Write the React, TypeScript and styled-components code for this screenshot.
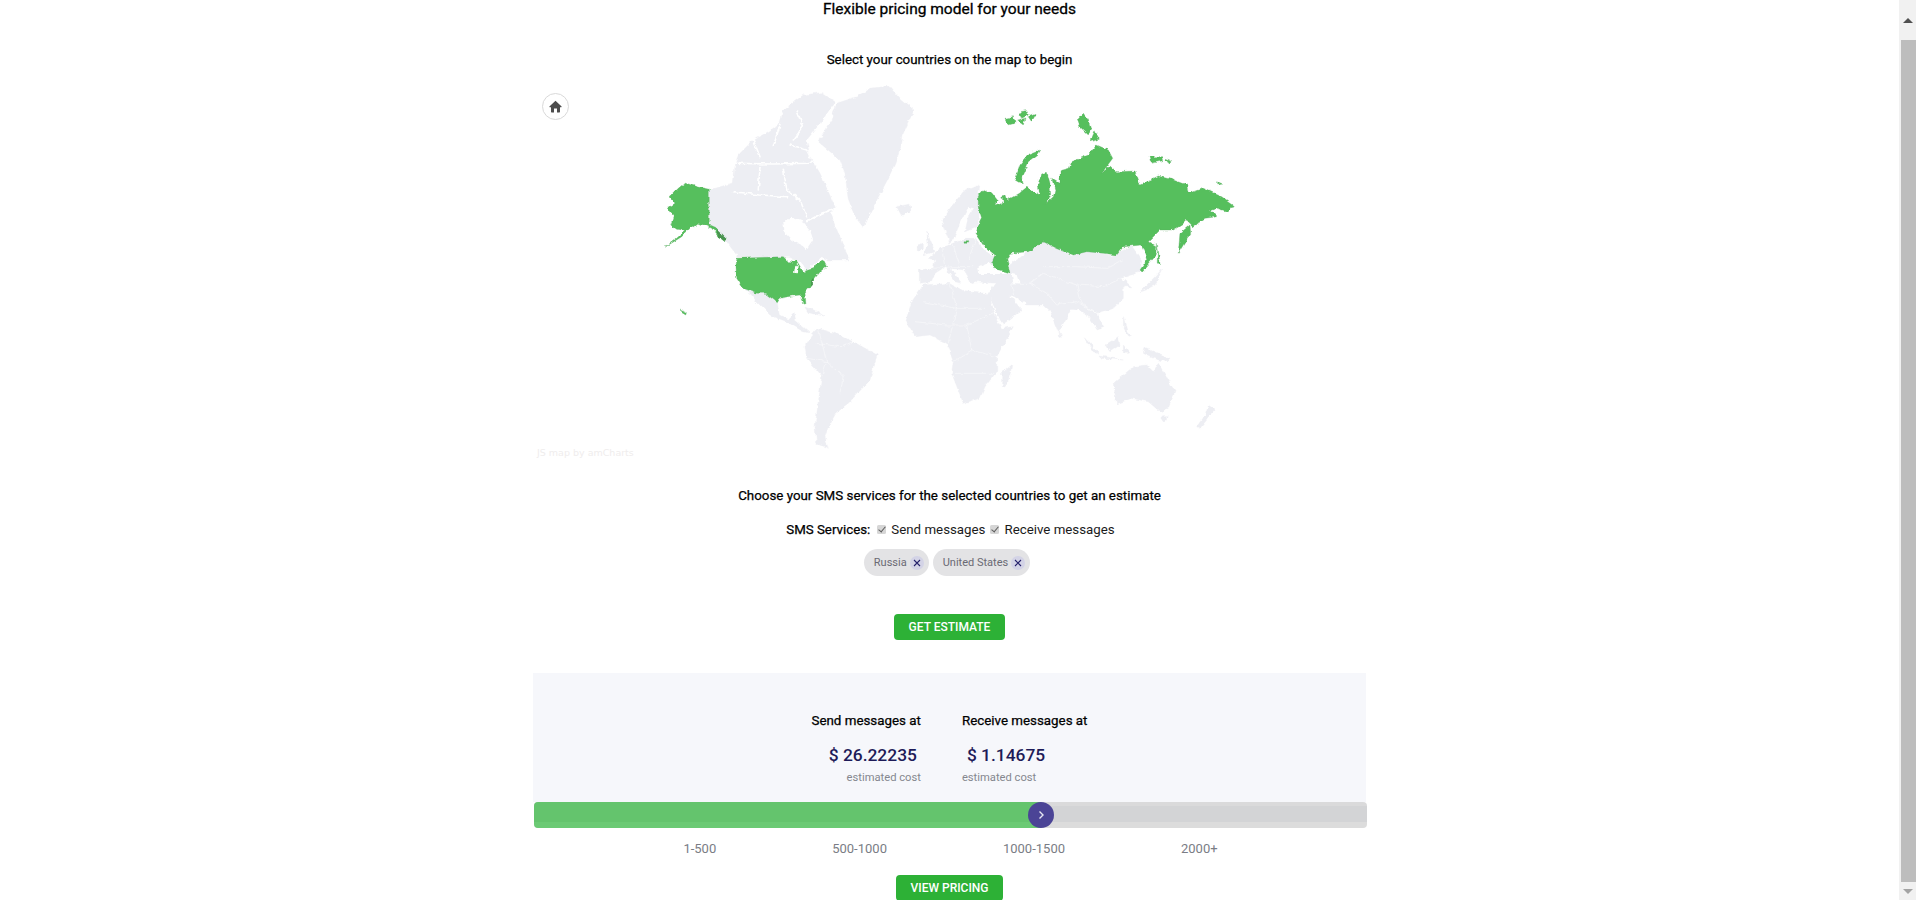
import React from "react";
import styled, { createGlobalStyle } from "styled-components";

const Global = createGlobalStyle`
  html, body { margin: 0; padding: 0; height: 900px; overflow: hidden; background: #fff; }
  body { font-family: Roboto, "Liberation Sans", sans-serif; color: #000; }
  * { box-sizing: border-box; }
`;

const Shell = styled.div`
  display: flex;
  width: 1916px;
  height: 900px;
  overflow: hidden;
`;
const Main = styled.main`
  flex: 1;
  min-width: 0;
  height: 900px;
  padding-top: 1px;
  overflow: hidden;
  display: flex;
  flex-direction: column;
  align-items: center;
`;
const ScrollBar = styled.div`
  width: 17px;
  height: 900px;
  background: #f1f1f1;
  display: flex;
  flex-direction: column;
  align-items: flex-end;
`;
const ScrollArrow = styled.div<{ $height: number; $up?: boolean; $tone: string }>`
  width: 17px;
  height: ${(p) => p.$height}px;
  display: flex;
  align-items: center;
  justify-content: center;
  &::before {
    content: "";
    width: 0;
    height: 0;
    border-left: 5px solid transparent;
    border-right: 5px solid transparent;
    ${(p) => (p.$up ? "border-bottom" : "border-top")}: 5px solid ${(p) => p.$tone};
  }
`;
const ScrollThumb = styled.div`
  width: 15px;
  height: 842px;
  background: #bdbdbd;
`;
const Title = styled.h1`
  margin: 0;
  font-size: 15.5px;
  line-height: 16px;
  font-weight: 400;
  -webkit-text-stroke: 0.3px #000;
`;
const Subtitle = styled.h2<{ $top: number }>`
  margin: ${(p) => p.$top}px 0 0;
  font-size: 13.35px;
  line-height: 16px;
  font-weight: 400;
  -webkit-text-stroke: 0.25px #000;
`;
const MapArea = styled.div`
  position: relative;
  width: 833px;
  height: 420px;
`;
const MapSvg = styled.svg`
  display: block;
  width: 833px;
  height: 420px;
`;
const Land = styled.polygon`
  fill: #edeef3;
  stroke: #edeef3;
  stroke-width: 0.4;
  stroke-linejoin: round;
`;
const Water = styled.polygon`
  fill: #fff;
`;
const Picked = styled.polygon`
  fill: #57bf5d;
  stroke: #5aa761;
  stroke-width: 0.3;
  stroke-linejoin: round;
`;
const PickedShade = styled.polygon`
  fill: #4a9350;
`;
const Frontier = styled.polyline`
  fill: none;
  stroke: #fff;
  stroke-width: 0.5;
  stroke-opacity: 0.85;
  stroke-linejoin: round;
`;
const Channel = styled.polyline`
  fill: none;
  stroke: #fff;
  stroke-width: 1.6;
  stroke-linecap: round;
  stroke-linejoin: round;
`;
const HomeButton = styled.button`
  position: absolute;
  left: 9px;
  top: 25px;
  width: 27px;
  height: 27px;
  padding: 0;
  border: 1px solid #d9d9d9;
  border-radius: 50%;
  background: #fff;
  display: flex;
  align-items: center;
  justify-content: center;
`;
const Credit = styled.span`
  position: absolute;
  left: 4px;
  top: 378px;
  font-family: "DejaVu Sans", sans-serif;
  font-size: 9.5px;
  line-height: 14px;
  color: #efeded;
`;
const ServicesRow = styled.div`
  margin: 16px 0 0 2px;
  height: 20px;
  display: flex;
  align-items: center;
  gap: 5px;
  font-size: 13.3px;
  line-height: 20px;
`;
const ServicesLabel = styled.span`
  -webkit-text-stroke: 0.25px #000;
  margin-right: 2px;
`;
const CheckLabel = styled.label`
  display: flex;
  align-items: center;
  color: #1b1b1b;
`;
const Check = styled.input`
  appearance: none;
  position: relative;
  width: 9px;
  height: 9px;
  margin: 0 5px 2px 0;
  border-radius: 1.5px;
  background: #d6d6d6;
  &::after {
    content: "";
    position: absolute;
    left: 2.8px;
    top: 0.6px;
    width: 3px;
    height: 6px;
    border: solid #5c5c5c;
    border-width: 0 1.3px 1.3px 0;
    transform: rotate(40deg);
  }
`;
const Chips = styled.div`
  margin: 9px 5px 0 0;
  display: flex;
  gap: 4px;
`;
const Chip = styled.div`
  height: 27px;
  border-radius: 14px;
  background: #e3e3e5;
  display: flex;
  align-items: center;
  padding: 0 5px 0 10px;
  gap: 3px;
  font-size: 11px;
  color: #6a6a74;
`;
const ChipClose = styled.span`
  width: 14px;
  height: 14px;
  border-radius: 50%;
  background: #d3d3e6;
  display: flex;
  align-items: center;
  justify-content: center;
`;
const ActionButton = styled.button<{ $top: number; $width: number }>`
  flex: none;
  margin-top: ${(p) => p.$top}px;
  width: ${(p) => p.$width}px;
  height: 26px;
  padding: 0;
  border: 0;
  border-radius: 4px;
  background: #2db136;
  color: #fff;
  font-family: inherit;
  font-size: 12px;
  font-weight: 500;
  text-transform: uppercase;
`;
const Results = styled.section`
  margin-top: 33px;
  width: 833px;
  display: flex;
  flex-direction: column;
`;
const Panel = styled.div`
  width: 833px;
  height: 129px;
  background: #f6f7fb;
  padding-top: 40px;
  display: flex;
  justify-content: center;
  gap: 41px;
`;
const CostColumn = styled.div<{ $end?: boolean }>`
  display: flex;
  flex-direction: column;
  align-items: ${(p) => (p.$end ? "flex-end" : "flex-start")};
`;
const CostTitle = styled.div`
  font-size: 13.35px;
  line-height: 16px;
  -webkit-text-stroke: 0.25px #000;
`;
const CostValue = styled.div<{ $end?: boolean }>`
  margin-top: 14px;
  font-size: 17.4px;
  line-height: 24px;
  font-weight: 500;
  color: #1e1b58;
  ${(p) => (p.$end ? "padding-right: 4px;" : "padding-left: 5px;")}
`;
const CostNote = styled.div`
  margin-top: 4px;
  font-size: 11.2px;
  line-height: 14px;
  color: #85878f;
`;
const SliderTrack = styled.div`
  position: relative;
  flex: none;
  margin-left: 1px;
  width: 833px;
  height: 26px;
  border-radius: 4px;
  background: linear-gradient(#dadadb 0 4px, #d3d4d6 4px 20px, #dcdcdc 20px);
`;
const SliderFill = styled.div`
  height: 26px;
  border-radius: 4px 0 0 4px;
  background: linear-gradient(#64c46d 0 20px, #6bca74 20px);
`;
const SliderKnob = styled.div`
  position: absolute;
  top: 0;
  margin-left: -13px;
  width: 26px;
  height: 26px;
  border-radius: 50%;
  background: #4b4496;
  display: flex;
  align-items: center;
  justify-content: center;
`;
const Tiers = styled.div`
  margin: 13px 0 0 2px;
  display: flex;
  justify-content: center;
  gap: 116px;
  font-size: 13px;
  line-height: 16px;
  color: #7a7d85;
`;

type Pt = [number, number];
const place = (ox: number, oy: number, pts: number[]): string => {
  const out: string[] = [];
  for (let i = 0; i < pts.length; i += 2) {
    out.push(`${(ox + pts[i] / 3).toFixed(1)},${(oy + pts[i + 1] / 3).toFixed(1)}`);
  }
  return out.join(" ");
};

const A: Pt = [520, 0];
const N: Pt = [650, 170];
const U: Pt = [640, 230];
const E: Pt = [900, 170];
const S: Pt = [960, 230];
const R: Pt = [960, 90];

const land: [Pt, number[]][] = [
  // Greenland
  [A, [950,310,1010,290,1050,265,1110,258,1145,300,1182,330,1150,400,1145,430,1125,490,1105,535,1060,620,1030,682,1005,650,985,600,975,520,960,480,895,425,930,370]],
  // Canada with the Arctic islands, channels are cut afterwards
  [A, [569,570,640,548,645,500,660,460,700,420,745,395,780,370,790,330,850,285,905,278,945,305,900,370,860,420,870,470,900,520,945,620,930,640,955,700,970,740,990,780,925,780,905,770,860,812,840,785,805,772,655,772,605,705,570,675]],
  [A, [1130,620,1170,612,1172,632,1145,648]],
  // Mexico, Central America
  [U, [310,175,350,190,375,190,412,218,418,255,445,268,462,250,468,272,510,308,490,305,440,275,390,255,350,215,335,195]],
  [U, [495,232,525,240,552,258,505,248]],
  // South America
  [U, [495,350,512,320,535,295,590,312,640,335,712,375,700,410,690,450,625,520,590,545,565,590,555,620,565,655,530,640,525,590,545,440,500,385]],
  // Iceland, British Isles, Scandinavia
  [E, [0,110,30,108,32,122,5,135]],
  [E, [80,185,92,215,105,245,70,255,85,225]],
  [E, [52,225,70,220,70,240,52,240]],
  [E, [240,45,190,65,150,115,125,155,140,195,150,220,165,195,180,160,205,110,222,115,205,140,195,185,232,170,240,115,235,70]],
  // Eurasia
  [E, [58,340,58,300,100,295,105,270,85,265,125,232,150,225,195,205,228,205,250,240,285,262,275,290,328,312,322,290,385,245,430,212,475,235,515,258,565,240,635,258,695,228,725,270,720,305,665,325,695,350,670,350,670,385,640,415,590,430,612,472,592,480,565,440,535,418,515,415,475,487,450,425,428,405,375,405,345,380,328,375,365,420,310,462,285,435,255,385,285,340,225,335,210,340,195,300,150,295,185,340,165,335,135,290,105,310,95,335]],
  // Africa
  [E, [70,345,150,340,195,365,255,370,280,430,305,475,340,470,290,560,290,605,255,650,240,685,190,700,155,610,160,575,140,520,90,495,45,500,18,450,35,395]],
  // Indian Ocean, Pacific
  [S, [155,405,148,450,135,470,125,465,125,430]],
  [S, [298,305,306,318,298,320]],
  [S, [540,185,590,135,608,115,585,165,555,180]],
  [S, [490,260,500,300,515,315,505,320,490,290]],
  [S, [370,320,420,372,400,365]],
  [S, [435,345,475,320,480,345,450,365]],
  [S, [420,378,490,390,425,385]],
  [S, [490,345,510,370,490,370]],
  [S, [555,352,630,385,620,395,580,385,550,370]],
  [S, [460,460,520,410,560,405,580,425,595,400,645,485,625,535,600,545,565,515,515,505,470,522]],
  [S, [605,560,622,560,615,575]],
  [S, [745,525,765,540,740,570,720,595,710,590,735,555]],
];

const waters: [Pt, number[]][] = [
  [A, [790,670,810,650,850,665,870,690,880,720,860,750,845,735,815,720,795,700]],
  [E, [232,290,260,278,320,300,330,312,280,312,235,312]],
  [E, [335,312,350,315,358,340,340,338]],
  [E, [270,385,298,445,305,460,285,430]],
  [E, [345,380,380,400,365,405]],
];

const channels: [Pt, number[]][] = [
  [A, [640,490,760,492,870,490,890,468]],
  [A, [720,500,715,570]],
  [A, [790,505,800,570,840,600,860,650]],
  [A, [810,435,860,450,870,470]],
  [A, [780,375,760,440]],
  [A, [700,420,720,470]],
  [A, [640,575,720,585,800,590]],
  [A, [860,665,905,640,945,625]],
  [A, [830,330,850,380,820,420]],
];

const frontiers: [Pt, number[]][] = [
  [E, [150,340,170,415,145,520]],
  [E, [170,415,255,415]],
  [E, [70,395,170,415]],
  [E, [45,455,140,465,200,465,280,430]],
  [E, [200,465,215,540,290,560]],
  [E, [160,575,215,540]],
  [E, [165,610,280,610]],
  [E, [225,335,255,345,285,340]],
  [E, [345,380,335,340,390,340,440,370,470,405]],
  [E, [390,340,430,310,530,345,610,350,665,325]],
  [E, [470,405,530,395,590,430]],
  [E, [530,345,545,400,590,430]],
  [E, [430,290,530,290,620,295,665,270]],
  [E, [100,295,160,290,220,290]],
  [E, [125,232,135,295]],
  [E, [160,225,180,290]],
  [E, [228,205,205,270]],
  [U, [535,295,560,395,545,440]],
  [U, [560,395,610,440,600,490]],
  [U, [530,340,600,350,640,335]],
  [U, [560,395,500,385]],
];

const russia: [Pt, number[]][] = [
  [R, [55,315,70,298,95,308,112,330,105,345,130,335,125,320,138,318,142,330,175,312,200,292,240,315,235,290,245,255,262,250,270,280,272,320,255,343,280,320,285,300,275,265,300,280,300,242,328,235,335,215,385,195,410,165,445,180,458,205,425,250,450,228,470,245,525,243,540,285,595,258,640,270,680,285,685,310,730,295,785,320,820,345,805,365,770,355,750,362,770,380,735,385,700,410,680,390,665,405,640,420,600,420,565,455,590,470,585,500,545,545,540,540,560,510,555,490,545,465,490,470,470,495,430,490,380,485,340,495,290,475,250,455,205,485,150,490,140,505,150,550,100,535,95,518,105,495,75,470,48,430,55,405,65,385,55,350]],
  [R, [690,405,692,430,670,465,655,490,660,430]],
  [R, [592,460,600,520,592,520]],
  [R, [242,180,235,192,205,215,185,260,190,285,165,270,180,225,205,195]],
  [R, [135,85,160,80,165,100,145,105]],
  [R, [178,65,200,62,205,75,185,85]],
  [R, [170,90,195,85,190,105]],
  [R, [205,80,228,72,215,95]],
  [R, [370,70,385,90,392,115,385,135,360,110,352,90]],
  [R, [405,122,418,148,390,155]],
  [R, [570,200,605,200,608,212,575,220]],
  [R, [615,208,635,215,625,222]],
  [R, [770,275,785,282,770,285]],
  [R, [12,455,27,455,25,460,12,460]],
];

const usa: [Pt, number[]][] = [
  [N, [105,38,140,50,178,58,178,165,200,175,215,195,230,205,225,215,205,200,185,175,165,165,140,160,120,175,95,200,45,232,80,205,105,182,80,178,62,165,70,140,52,115,75,100,60,80,85,55]],
  [U, [290,85,430,80,445,95,470,92,490,125,520,115,530,100,552,92,560,108,540,125,525,145,515,165,495,190,498,222,488,215,480,195,455,198,420,205,412,218,395,205,375,190,350,190,310,175,290,145,288,110]],
  [U, [120,240,132,245,142,250,140,255,130,249]],
];

const usaShades: [Pt, number[]][] = [
  [N, [198,175,215,190,230,205,225,215,205,198]],
  [U, [514,148,520,145,518,162,513,166]],
];

const usaLakes: [Pt, number[]][] = [
  [U, [465,110,474,100,470,130,462,128]],
  [U, [445,92,470,92,458,97]],
];

export default function App() {
  return (
    <Shell>
      <Global />
      <Main>
        <Title>Flexible pricing model for your needs</Title>
        <Subtitle $top={35}>Select your countries on the map to begin</Subtitle>
        <MapArea>
          <MapSvg viewBox="533 68 833 420" role="img" aria-label="World map">
            <defs>
              <filter id="coast" x="-3%" y="-3%" width="106%" height="106%">
                <feTurbulence type="fractalNoise" baseFrequency="0.17" numOctaves="3" seed="4" result="noise" />
                <feDisplacementMap in="SourceGraphic" in2="noise" scale="4.5" xChannelSelector="R" yChannelSelector="G" />
              </filter>
            </defs>
            <g filter="url(#coast)">
              {land.map(([o, p], i) => (
                <Land key={i} points={place(o[0], o[1], p)} />
              ))}
              {waters.map(([o, p], i) => (
                <Water key={i} points={place(o[0], o[1], p)} />
              ))}
              {channels.map(([o, p], i) => (
                <Channel key={i} points={place(o[0], o[1], p)} />
              ))}
              {frontiers.map(([o, p], i) => (
                <Frontier key={i} points={place(o[0], o[1], p)} />
              ))}
              {russia.map(([o, p], i) => (
                <Picked key={i} points={place(o[0], o[1], p)} />
              ))}
              {usa.map(([o, p], i) => (
                <Picked key={i} points={place(o[0], o[1], p)} />
              ))}
              {usaShades.map(([o, p], i) => (
                <PickedShade key={i} points={place(o[0], o[1], p)} />
              ))}
              {usaLakes.map(([o, p], i) => (
                <Water key={i} points={place(o[0], o[1], p)} />
              ))}
            </g>
          </MapSvg>
          <HomeButton aria-label="Home">
            <svg width="13" height="13" viewBox="0 0 13 13">
              <path
                d="M6.5 .8 L12.6 6.6 Q12.8 7.2 12.2 7.2 H11 V11.8 Q11 12.4 10.4 12.4 H8 V8.6 H5 V12.4 H2.6 Q2 12.4 2 11.8 V7.2 H.8 Q.2 7.2 .4 6.6 Z"
                fill="#4d4d4d"
              />
            </svg>
          </HomeButton>
          <Credit>JS map by amCharts</Credit>
        </MapArea>
        <Subtitle $top={0}>Choose your SMS services for the selected countries to get an estimate</Subtitle>
        <ServicesRow>
          <ServicesLabel>SMS Services:</ServicesLabel>
          <CheckLabel>
            <Check type="checkbox" checked disabled readOnly />
            Send messages
          </CheckLabel>
          <CheckLabel>
            <Check type="checkbox" checked disabled readOnly />
            Receive messages
          </CheckLabel>
        </ServicesRow>
        <Chips>
          {["Russia", "United States"].map((name) => (
            <Chip key={name}>
              {name}
              <ChipClose>
                <svg width="8" height="8" viewBox="0 0 8 8">
                  <path d="M1 1 L7 7 M7 1 L1 7" stroke="#24206a" strokeWidth="1.1" />
                </svg>
              </ChipClose>
            </Chip>
          ))}
        </Chips>
        <ActionButton $top={38} $width={111}>Get estimate</ActionButton>
        <Results>
          <Panel>
            <CostColumn $end>
              <CostTitle>Send messages at</CostTitle>
              <CostValue $end>$ 26.22235</CostValue>
              <CostNote>estimated cost</CostNote>
            </CostColumn>
            <CostColumn>
              <CostTitle>Receive messages at</CostTitle>
              <CostValue>$ 1.14675</CostValue>
              <CostNote>estimated cost</CostNote>
            </CostColumn>
          </Panel>
          <SliderTrack>
            <SliderFill style={{ width: "60.9%" }} />
            <SliderKnob style={{ left: "60.9%" }}>
              <svg width="10" height="10" viewBox="0 0 10 10">
                <path d="M3.5 1.5 L7 5 L3.5 8.5" fill="none" stroke="#e6e6f2" strokeWidth="1.4" />
              </svg>
            </SliderKnob>
          </SliderTrack>
        </Results>
        <Tiers>
          <span>1-500</span>
          <span>500-1000</span>
          <span>1000-1500</span>
          <span>2000+</span>
        </Tiers>
        <ActionButton $top={18} $width={107}>View pricing</ActionButton>
      </Main>
      <ScrollBar>
        <ScrollArrow $height={40} $up $tone="#505050" />
        <ScrollThumb />
        <ScrollArrow $height={18} $tone="#a3a3a3" />
      </ScrollBar>
    </Shell>
  );
}
